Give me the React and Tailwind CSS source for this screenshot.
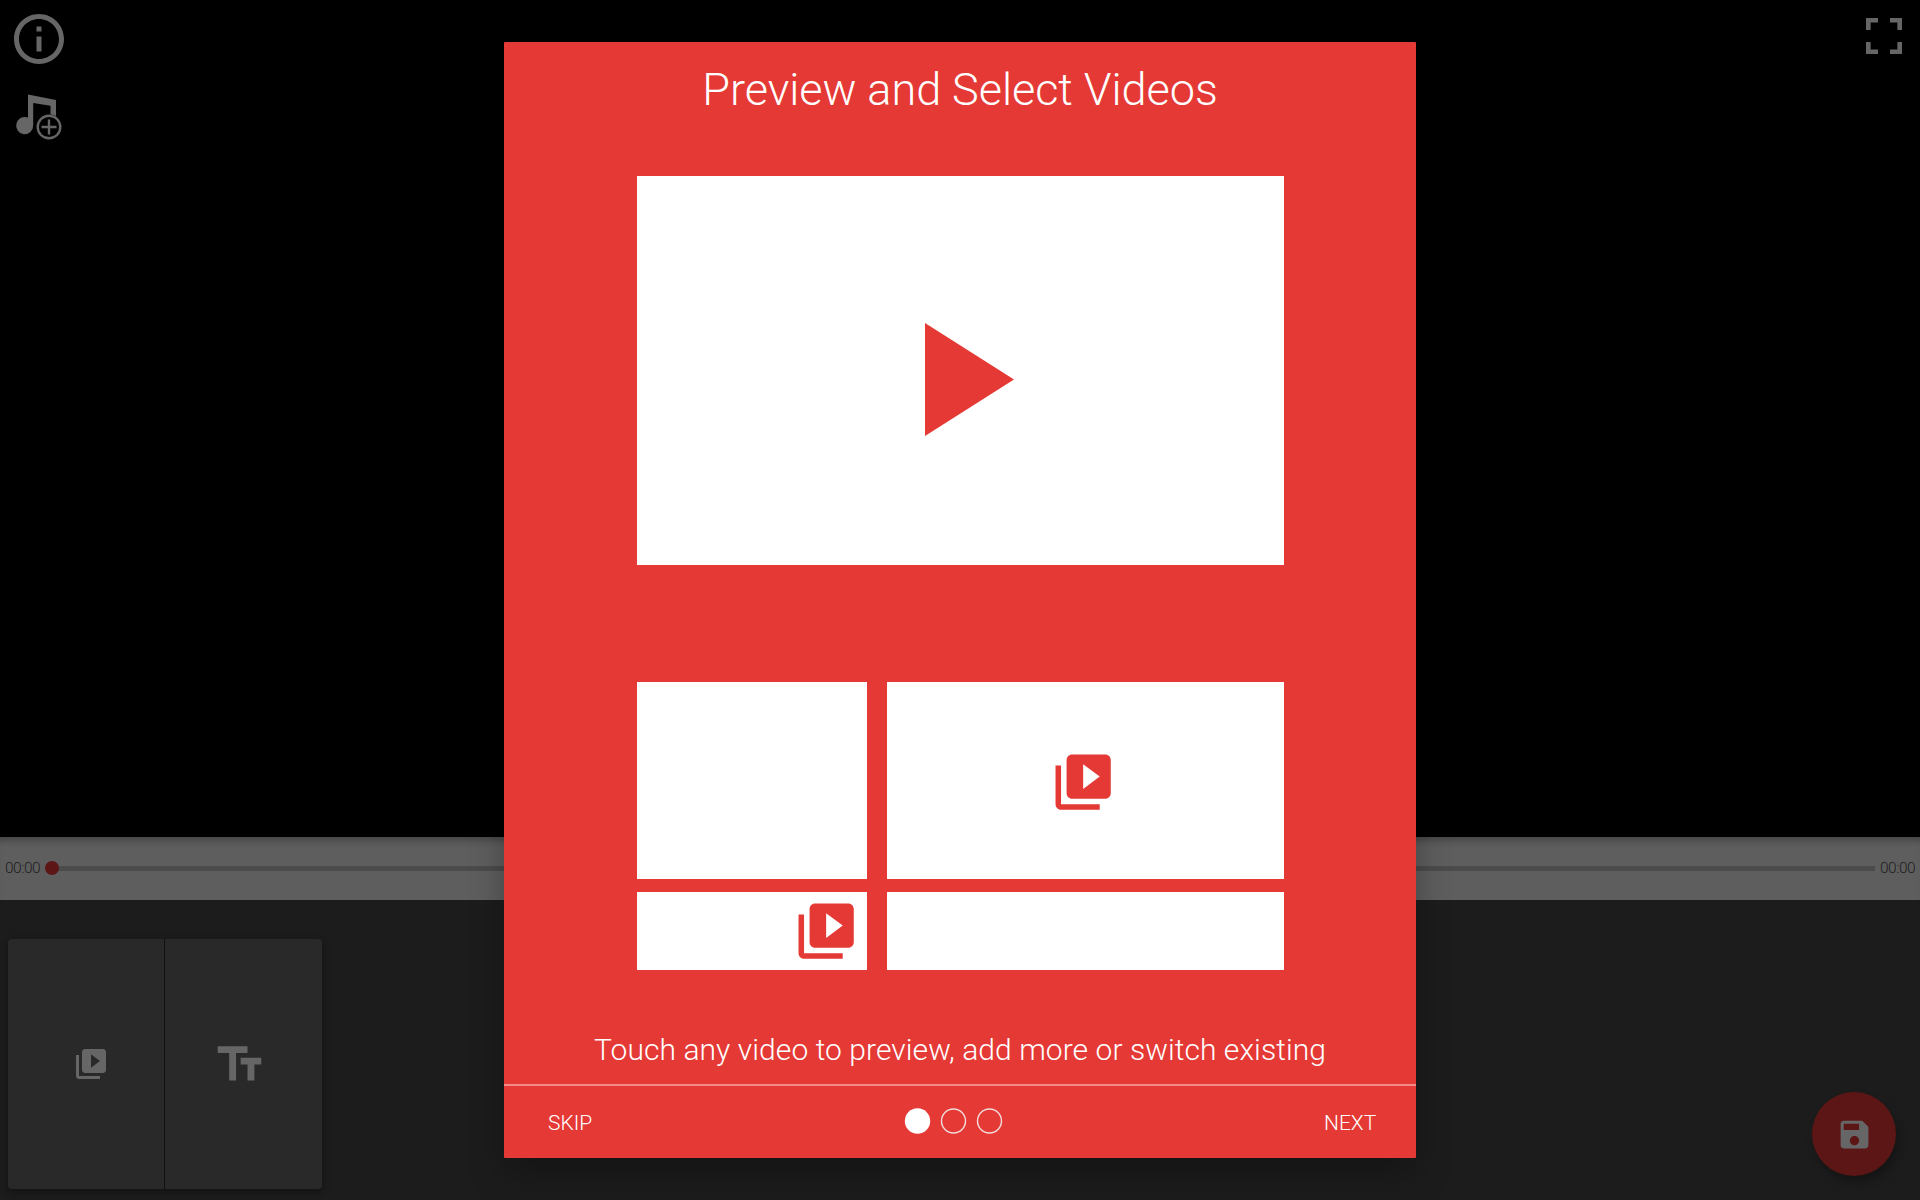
const LIB = "M4 6H2v14c0 1.100.9 2 2 2h14v-2H4V6zm16-4H8c-1.100 0-2 .9-2 2v12c0 1.100.9 2 2 2h12c1.100 0 2-.9 2-2V4c0-1.100-.9-2-2-2zm-8 12.500v-9l6 4.500-6 4.500z";

function LibraryIcon({ className }) {
  return (
    <svg viewBox="0 0 24 24" className={className} fill="currentColor">
      <path d={LIB} />
    </svg>
  );
}

function StageArea() {
  return (
    <div className="flex h-[837px] items-start justify-between bg-black text-[#666666]">
      <div className="flex flex-col items-start pt-[9px] pl-[9px]">
        <svg viewBox="0 0 24 24" className="size-[60px]" fill="currentColor">
          <path d="M11 17h2v-6h-2v6zm1-15C6.480 2 2 6.480 2 12s4.480 10 10 10 10-4.480 10-10S17.520 2 12 2zm0 18c-4.410 0-8-3.590-8-8s3.590-8 8-8 8 3.590 8 8-3.590 8-8 8zM11 9h2V7h-2v2z" />
        </svg>
        <svg viewBox="10 88 60 60" className="mt-[19px] ml-[1px] size-[60px]" fill="none">
          <path fill="currentColor" d="M28 94.500L56 100V120H50.500V105.800L33.200 103V125.500A8.500 8.700 0 1 1 28 117.600Z" />
          <circle cx="49" cy="127" r="12.800" fill="#000" />
          <circle cx="49" cy="127" r="11.300" stroke="currentColor" strokeWidth="2.400" />
          <path d="M49 119.500v15M41.500 127h15" stroke="currentColor" strokeWidth="2.400" />
        </svg>
      </div>
      <svg viewBox="0 0 36 36" className="mt-[18px] mr-[18px] size-9" fill="none" stroke="currentColor" strokeWidth="4.600">
        <path d="M2.300 12V2.300H12M24 2.300h9.700V12M33.700 24v9.700H24M12 33.700H2.300V24" />
      </svg>
    </div>
  );
}

function Timeline() {
  return (
    <div className="flex h-[63px] bg-[#5e5e5e] px-[5px] pt-[21px] text-[15.500px] leading-[20px] font-light text-[#202020] shadow-[inset_0_9px_7px_-5px_#464646]">
      <span className="w-[35px] tracking-[-0.5px]">00:00</span>
      <div className="ml-[5px] flex h-[20px] flex-1 items-center">
        <span className="z-10 size-[14px] rounded-full bg-[#5c1615]" />
        <span className="mt-px -ml-[7px] h-[5px] flex-1 bg-[#4b4b4b]" />
      </div>
      <span className="ml-[5px] w-[35px] tracking-[-0.5px]">00:00</span>
    </div>
  );
}

function ClipTray() {
  return (
    <div className="flex h-[300px] items-start justify-between bg-[#1c1c1c] text-[#666666]">
      <div className="mt-[39px] ml-2 flex h-[250px] w-[314px] rounded-[4px] bg-[#292929] shadow-[0_3px_7px_1px_rgba(0,0,0,0.3)]">
        <div className="flex w-[157px] border-r border-[#111111] pt-[107px] pl-[65px]">
          <LibraryIcon className="size-9" />
        </div>
        <div className="flex pt-[98px] pl-[47.400px]">
          <svg viewBox="0 0 24 24" className="size-[55px]" fill="currentColor">
            <path d="M2.500 4v3h5v12h3V7h5V4h-13zm19 5h-9v3h3v7h3v-7h3V9z" />
          </svg>
        </div>
      </div>
      <div className="mt-48 mr-6 flex size-[84px] items-center justify-center rounded-full bg-[#5c1615] shadow-[3px_6px_9px_rgba(0,0,0,0.28)]">
        <svg viewBox="0 0 24 24" className="size-[37px]" fill="currentColor">
          <path d="M17 3H5c-1.110 0-2 .9-2 2v14c0 1.100.890 2 2 2h14c1.100 0 2-.9 2-2V7l-4-4zm-5 16c-1.660 0-3-1.340-3-3s1.340-3 3-3 3 1.340 3 3-1.340 3-3 3zm3-10H5V5h10v4z" />
        </svg>
      </div>
    </div>
  );
}

function IntroDialog() {
  return (
    <div className="absolute top-[42px] left-[504px] flex h-[1116px] w-[912px] flex-col rounded-[1px] bg-[#e53935] text-white shadow-[0_16px_36px_rgba(0,0,0,0.28)]">
      <h1 className="pt-[19px] text-center text-[45px] leading-[58px] font-light tracking-[-0.04px] whitespace-nowrap">Preview and Select Videos</h1>
      <div className="mt-[57px] ml-[132.500px] flex h-[388.500px] w-[647.500px] bg-white pt-[147px] pl-[288.500px] text-[#e53935]">
        <svg viewBox="0 0 89 113" className="h-[113px] w-[89px]" fill="currentColor">
          <path d="M0 0L89 56.500L0 113Z" />
        </svg>
      </div>
      <div className="mt-[117.500px] ml-[132.500px] grid w-[647.500px] grid-cols-[230.700px_397.300px] grid-rows-[197px_78px] gap-x-[19.500px] gap-y-[13px] text-[#e53935]">
        <div className="bg-white" />
        <div className="bg-white pt-[66.500px] pl-[163px]">
          <LibraryIcon className="size-[66.300px]" />
        </div>
        <div className="bg-white pt-[6.300px] pl-[156.200px]">
          <LibraryIcon className="size-[66.300px]" />
        </div>
        <div className="bg-white" />
      </div>
      <p className="mt-[60px] text-center text-[30px] leading-[40px] font-light tracking-[0.06px] whitespace-nowrap">Touch any video to preview, add more or switch existing</p>
      <div className="mt-auto flex h-[74px] items-start justify-between border-t-2 border-[#f28b88] pr-[40px] pl-[44px] text-[21px] leading-[28px] font-light">
        <span className="mt-[23px] w-[52px]">SKIP</span>
        <svg viewBox="0 0 100 28" className="mt-[21px] mr-[19px] h-7 w-[100px]" fill="none">
          <circle cx="14.500" cy="14" r="12.700" fill="#fff" />
          <circle cx="50.500" cy="14" r="12" stroke="#f0dcdc" strokeWidth="1.400" />
          <circle cx="86.500" cy="14" r="12" stroke="#f0dcdc" strokeWidth="1.400" />
        </svg>
        <span className="mt-[23px] w-[52px] text-right">NEXT</span>
      </div>
    </div>
  );
}

export default function App() {
  return (
    <div className="relative h-[1200px] w-[1920px] overflow-hidden font-['Roboto',sans-serif]">
      <StageArea />
      <Timeline />
      <ClipTray />
      <IntroDialog />
    </div>
  );
}
